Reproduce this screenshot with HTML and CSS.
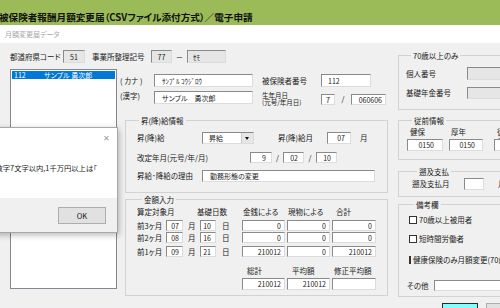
FILE: index.html
```html
<!DOCTYPE html>
<html lang="ja">
<head>
    <meta charset="UTF-8" />
    <title>月額変更届データ</title>
    <link rel="stylesheet" href="styles.css">
</head>
<body>
    <div class="titlebar">被保険者報酬月額変更届（CSVファイル添付方式）／電子申請</div>
    <div class="subbar">月額変更届データ</div>

    <div class="main">
        <div class="left">
            <div class="code-row">
                <span>都道府県コード</span>
                <span class="box ro center">51</span>
                <span class="pad7">事業所整理記号</span>
                <span class="box ro center">77</span>
                <span class="center">－</span>
                <span class="box ro pl5">ｾﾓ</span>
            </div>

            <div class="body-row">
                <div class="listbox">
                    <div class="item sel"><span>112</span><span>サンプル 勇次郎</span></div>
                </div>

                <div class="form">
                    <div class="name-row">
                        <span>( カナ )</span>
                        <span class="box pl7">ｻﾝﾌﾟﾙ ｺｳｼﾞﾛｳ</span>
                        <span></span>
                        <span>被保険者番号</span>
                        <span class="box pl6">112</span>
                    </div>
                    <div class="name-row second">
                        <span>(漢字)</span>
                        <span class="box pl7">サンプル　勇次郎</span>
                        <span></span>
                        <span class="two-line">生年月日<br>(元号/年月日)</span>
                        <span class="box small center">7</span>
                        <span class="slash">/</span>
                        <span class="box small num">060606</span>
                    </div>

                    <fieldset class="grp raise">
                        <legend>昇(降)給情報</legend>
                        <div class="raise-1">
                            <span>昇(降)給</span>
                            <span class="select"><span class="sel-text">昇給</span><span class="arrow"></span></span>
                            <span></span>
                            <span>昇(降)給月</span>
                            <span class="box num p5">07</span>
                            <span></span>
                            <span>月</span>
                        </div>
                        <div class="raise-2">
                            <span>改定年月(元号/年/月)</span>
                            <span class="box num p5">9</span>
                            <span class="slash">/</span>
                            <span class="box num p5">02</span>
                            <span class="slash">/</span>
                            <span class="box num p5">10</span>
                        </div>
                        <div class="raise-3">
                            <span>昇給･降給の理由</span>
                            <span class="box pl7">勤務形態の変更</span>
                        </div>
                    </fieldset>

                    <fieldset class="grp amount">
                        <legend>金額入力</legend>
                        <div class="amount-head">
                            <span>算定対象月</span>
                            <span>基礎日数</span>
                            <span>金銭による</span>
                            <span>現物による</span>
                            <span>合計</span>
                        </div>
                        <div class="money-row">
                            <span>前3ヶ月</span>
                            <span class="box num p3">07</span>
                            <span class="unit">月</span>
                            <span class="box num p4">10</span>
                            <span class="unit">日</span>
                            <span class="box money num">0</span>
                            <span class="box money num">0</span>
                            <span class="box money num">0</span>
                        </div>
                        <div class="money-row">
                            <span>前2ヶ月</span>
                            <span class="box num p3">08</span>
                            <span class="unit">月</span>
                            <span class="box num p4">16</span>
                            <span class="unit">日</span>
                            <span class="box money num">0</span>
                            <span class="box money num">0</span>
                            <span class="box money num">0</span>
                        </div>
                        <div class="money-row last">
                            <span>前1ヶ月</span>
                            <span class="box num p3">09</span>
                            <span class="unit">月</span>
                            <span class="box num p4">21</span>
                            <span class="unit">日</span>
                            <span class="box money num">210012</span>
                            <span class="box money num">0</span>
                            <span class="box money num">210012</span>
                        </div>
                        <div class="total-head">
                            <span>総計</span>
                            <span>平均額</span>
                            <span class="pl2">修正平均額</span>
                        </div>
                        <div class="total-row">
                            <span class="box money num">210012</span>
                            <span class="box money num">210012</span>
                            <span class="box money"></span>
                        </div>
                    </fieldset>
                </div>
            </div>
        </div>

        <div class="right">
            <fieldset class="grp side over70">
                <legend>70歳以上のみ</legend>
                <div class="side-row">
                    <span>個人番号</span>
                    <span class="box ro"></span>
                </div>
                <div class="side-row second">
                    <span>基礎年金番号</span>
                    <span class="box ro"></span>
                </div>
            </fieldset>

            <fieldset class="grp side before">
                <legend>従前情報</legend>
                <div class="before-head">
                    <span>健保</span>
                    <span>厚年</span>
                    <span>従前改定月</span>
                </div>
                <div class="before-row">
                    <span class="box num p8">0150</span>
                    <span class="box num p7 narrow">0150</span>
                    <span class="box"></span>
                </div>
            </fieldset>

            <fieldset class="grp side retro">
                <legend>遡及支払</legend>
                <div class="retro-row">
                    <span>遡及支払月</span>
                    <span class="box"></span>
                    <span class="retro-unit">月</span>
                </div>
            </fieldset>

            <fieldset class="grp side notes">
                <legend>備考欄</legend>
                <div class="check-row"><span class="check"></span>70歳以上被用者</div>
                <div class="check-row second">
                    <span class="check"></span>短時間労働者</div>
                <div class="check-row third">
                    <span class="check"></span>健康保険のみ月額変更(70歳到達時の契約変更等)</div>
                <div class="other-row">
                    <span>その他</span>
                    <span class="box"></span>
                </div>
            </fieldset>

            <div class="buttons">
                <button class="btn primary">登録</button>
                <button class="btn">終了</button>
            </div>
        </div>
    </div>

    <div class="dialog">
        <div class="dialog-title"><span class="close">✕</span></div>
        <div class="dialog-msg">金額は半角数字7文字以内,1千万円以上は「</div>
        <div class="dialog-foot">
            <button class="ok">OK</button>
        </div>
    </div>
</body>
</html>
```

FILE: styles.css
```css
body {
    margin: 0;
    width: 500px;
    height: 308px;
    overflow: hidden;
    position: relative;
    background: #f0f0f0;
    color: #1a1a1a;
    font-family: "Noto Sans CJK JP", sans-serif;
    font-size: 7.5px;
    line-height: 10px;
    font-feature-settings: "palt";
}
.titlebar {
    height: 25px;
    box-sizing: border-box;
    padding-top: 11px;
    margin-left: -1px;
    background: #9bbb59;
    color: #111;
    font-size: 9.6px;
    line-height: 12px;
    font-weight: bold;
    white-space: nowrap;
}
.subbar {
    height: 18px;
    padding-left: 5px;
    background: #fff;
    color: #a8a8a8;
    font-size: 7px;
    line-height: 18px;
}
.main {
    display: flex;
}
.left {
    width: 388px;
    flex: none;
    padding-left: 10px;
    box-sizing: border-box;
}
.right {
    width: 130px;
    flex: none;
    margin-left: 10px;
}

/* text boxes */
.box {
    display: flex;
    align-items: center;
    box-sizing: border-box;
    height: 12px;
    background: #fff;
    border: 1px solid;
    border-color: #8a8a8a #dcdcdc #dcdcdc #8a8a8a;
    font-size: 7px;
    white-space: nowrap;
    overflow: hidden;
}
.box.ro {
    background: #e6e6e6;
}
.center {
    justify-content: center;
    text-align: center;
}
.num {
    justify-content: flex-end;
    padding-right: 3px;
}
.p3 { padding-right: 3px; }
.p4 { padding-right: 4px; }
.p5 { padding-right: 5px; }
.p7 { padding-right: 7px; }
.p8 { padding-right: 8px; }
.pl2 { padding-left: 2px; }
.pl5 { padding-left: 5px; }
.pl6 { padding-left: 6px; }
.pl7 { padding-left: 7px; }
.pad7 { padding-left: 7px; }
.slash {
    text-align: center;
}

.code-row {
    display: grid;
    grid-template-columns: 53px 22px 66px 21px 15px 39px;
    align-items: center;
    height: 13px;
    margin-top: 7px;
}
.code-row .box {
    height: 13px;
}
.body-row {
    display: flex;
    margin-top: 6px;
}
.listbox {
    width: 107px;
    height: 220px;
    box-sizing: border-box;
    padding: 1px;
    background: #fff;
    border: 1px solid #828790;
}
.item {
    display: grid;
    grid-template-columns: 30px auto;
    height: 8px;
    padding-left: 2px;
    font-size: 7px;
    line-height: 8px;
}
.item.sel {
    background: #0078d7;
    color: #fff;
}
.form {
    width: 268px;
    margin-left: 3px;
}
.name-row {
    display: grid;
    grid-template-columns: 34px 99px 9px 59px 50px;
    align-items: center;
    height: 13px;
    margin-top: 5px;
}
.name-row .box {
    height: 13px;
}
.name-row.second {
    grid-template-columns: 34px 99px 9px 59px 14px 16px 35px;
    align-items: start;
    height: 14px;
    margin-top: 4px;
}
.name-row .box.small {
    height: 11px;
    margin-top: 3px;
}
.name-row .slash {
    margin-top: 3px;
}
.two-line {
    font-size: 6.5px;
    line-height: 7px;
    margin-top: 1px;
}

/* group boxes */
.grp {
    margin: 0;
    padding: 0;
    border: 1px solid #d2d2d2;
    min-width: 0;
}
.grp legend {
    padding: 0 2px;
    margin-left: 5px;
    font-size: 7.5px;
    line-height: 9px;
}
.raise {
    width: 263px;
    box-sizing: border-box;
    margin: 11px 0 0 5px;
    padding: 7px 0 10px 11px;
}
.raise legend {
    margin-left: 2px;
}
.raise-1 {
    display: grid;
    grid-template-columns: 65px 52px 24px 49px 24px 9px auto;
    align-items: center;
    height: 12px;
}
.select {
    display: flex;
    height: 12px;
    box-sizing: border-box;
    background: #fff;
    border: 1px solid;
    border-color: #8a8a8a #dcdcdc #dcdcdc #8a8a8a;
    font-size: 7px;
}
.sel-text {
    flex: 1;
    padding-left: 6px;
    line-height: 10px;
}
.arrow {
    position: relative;
    width: 11px;
    background: #e6e6e6;
    border-left: 1px solid #c8c8c8;
}
.arrow::after {
    content: "";
    position: absolute;
    left: 3px;
    top: 4px;
    border-left: 2.5px solid transparent;
    border-right: 2.5px solid transparent;
    border-top: 3px solid #111;
}
.raise-2 {
    display: grid;
    grid-template-columns: 113px 22px 11px 21px 12px 21px;
    align-items: center;
    height: 11px;
    margin-top: 8px;
}
.raise-2 .box {
    height: 11px;
}
.raise-3 {
    display: grid;
    grid-template-columns: 65px 173px;
    align-items: center;
    height: 12px;
    margin-top: 7px;
}
.amount {
    width: 263px;
    box-sizing: border-box;
    margin: 2px 0 0 5px;
    padding: 3px 0 5px 11px;
}
.amount-head {
    display: grid;
    grid-template-columns: 60px 46px 45px 48px auto;
    height: 10px;
}
.money-row {
    display: grid;
    grid-template-columns: 29px 17px 17px 16px 26px 45px 45px 44px;
    align-items: center;
    height: 11px;
    margin-top: 1px;
}
.money-row:nth-child(3) {
    margin-top: 3px;
}
.money-row.last {
    margin-top: 3px;
}
.money-row .box {
    height: 11px;
}
.unit {
    padding-left: 5px;
}
.money-row .unit:nth-of-type(5) {
    padding-left: 6px;
}
.box.money {
    width: 43px;
}
.money-row .box.money:last-child,
.total-row .box.money:last-child {
    width: 44px;
}
.total-head {
    display: grid;
    grid-template-columns: 45px 45px 44px;
    height: 10px;
    margin-top: 9px;
    padding-left: 105px;
}
.total-head span:not(.pl2) {
    padding-left: 5px;
}
.total-row {
    display: grid;
    grid-template-columns: 45px 45px 44px;
    margin-top: 2px;
    padding-left: 105px;
}

/* right column */
.side {
    width: 130px;
    box-sizing: border-box;
}
.over70 {
    margin-top: 8px;
    padding: 7px 0 10px 7px;
}
.side-row {
    display: grid;
    grid-template-columns: 61px 60px;
    align-items: center;
    height: 13px;
}
.side-row .box {
    height: 13px;
}
.side-row.second {
    height: 12px;
    margin-top: 7px;
}
.side-row.second .box {
    height: 12px;
}
.before {
    margin-top: 6px;
    padding: 2px 0 8px 8px;
}
.before-head {
    display: grid;
    grid-template-columns: 42px 42px auto;
    height: 10px;
}
.before-head span {
    padding-left: 3px;
}
.before-head span:nth-child(2) {
    padding-left: 2px;
}
.before-head span:nth-child(3) {
    padding-left: 6px;
}
.before-row {
    display: grid;
    grid-template-columns: 42px 45px 40px;
    margin-top: 2px;
}
.before-row .box {
    width: 36px;
}
.before-row .box.narrow {
    width: 34px;
}
.retro {
    margin-top: 7px;
    padding: 2px 0 6px 13px;
}
.retro-row {
    display: grid;
    grid-template-columns: 52px 20px auto;
    align-items: center;
    height: 12px;
}
.retro-unit {
    padding-left: 14px;
}
.notes {
    margin-top: 3px;
    padding: 6px 0 5px 10px;
}
.check-row {
    display: flex;
    align-items: center;
    height: 10px;
    white-space: nowrap;
}
.check-row.second {
    margin-top: 9px;
}
.check-row.third {
    margin-top: 11px;
}
.check {
    width: 8px;
    height: 8px;
    box-sizing: border-box;
    margin-right: 2px;
    background: #fff;
    border: 1px solid #333;
}
.other-row {
    display: grid;
    grid-template-columns: 27px 80px;
    align-items: center;
    height: 11px;
    margin: 15px 0 0 -2px;
}
.other-row .box {
    height: 11px;
}
.buttons {
    display: flex;
    margin-top: 6px;
    padding-left: 44px;
}
.btn {
    width: 36px;
    height: 20px;
    padding: 2px 0 0;
    box-sizing: border-box;
    background: #e1e1e1;
    border: 1px solid #adadad;
    font-family: inherit;
    font-size: 7.5px;
    line-height: 9px;
    vertical-align: top;
}
.btn.primary {
    background: #80ffff;
    border-color: #2b2b2b;
}
.btn + .btn {
    margin-left: 8px;
}

/* message box */
.dialog {
    position: absolute;
    left: -50px;
    top: 127px;
    width: 168px;
    height: 106px;
    box-sizing: border-box;
    display: flex;
    flex-direction: column;
    background: #fff;
    border: 1px solid #a8a8a8;
    box-shadow: 1px 2px 6px rgba(0, 0, 0, 0.28);
}
.dialog-title {
    display: flex;
    justify-content: flex-end;
    height: 20px;
    padding-right: 7px;
}
.close {
    color: #9a9a9a;
    font-size: 8px;
    line-height: 20px;
}
.dialog-msg {
    padding-left: 8px;
    margin-top: 16px;
    font-size: 7.3px;
    line-height: 8px;
    white-space: nowrap;
}
.dialog-foot {
    display: flex;
    justify-content: flex-end;
    margin-top: auto;
    height: 34px;
    box-sizing: border-box;
    padding: 9px 11px 0 0;
    background: #f0f0f0;
}
.ok {
    width: 48px;
    height: 17px;
    padding: 0;
    background: #e1e1e1;
    border: 1px solid #adadad;
    font-family: inherit;
    font-size: 7.5px;
    color: #111;
}
```
